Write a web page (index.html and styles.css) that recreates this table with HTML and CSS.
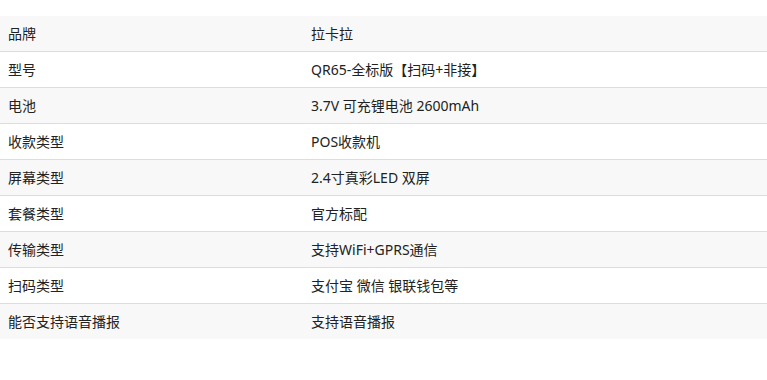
FILE: index.html
```html
<!DOCTYPE html>
<html>
<head>
    <meta charset="utf-8">
    <title>产品参数</title>
    <link rel="stylesheet" href="styles.css">
</head>
<body>
    <table class="spec-table">
        <tr><td class="name">品牌</td><td class="value">拉卡拉</td></tr>
        <tr><td class="name">型号</td><td class="value">QR65-全标版【扫码+非接】</td></tr>
        <tr><td class="name">电池</td><td class="value">3.7V 可充锂电池 2600mAh</td></tr>
        <tr><td class="name">收款类型</td><td class="value">POS收款机</td></tr>
        <tr><td class="name">屏幕类型</td><td class="value">2.4寸真彩LED 双屏</td></tr>
        <tr><td class="name">套餐类型</td><td class="value">官方标配</td></tr>
        <tr><td class="name">传输类型</td><td class="value">支持WiFi+GPRS通信</td></tr>
        <tr><td class="name">扫码类型</td><td class="value">支付宝 微信 银联钱包等</td></tr>
        <tr><td class="name">能否支持语音播报</td><td class="value">支持语音播报</td></tr>
    </table>
</body>
</html>
```

FILE: styles.css
```css
body { margin: 0; padding-top: 16px; background: #fff; font-family: "Noto Sans", "Noto Sans CJK SC", sans-serif; font-size: 14px; color: #222; }
.spec-table { width: 100%; border-collapse: collapse; table-layout: fixed; }
.spec-table tr { border-bottom: 1px solid #ddd; }
.spec-table tr:last-child { border-bottom: none; }
.spec-table tr:nth-child(odd) { background: #f8f8f8; }
.spec-table td { height: 35px; padding: 0 8px; line-height: 35px; white-space: nowrap; }
.spec-table td.name { width: 287px; }
```
